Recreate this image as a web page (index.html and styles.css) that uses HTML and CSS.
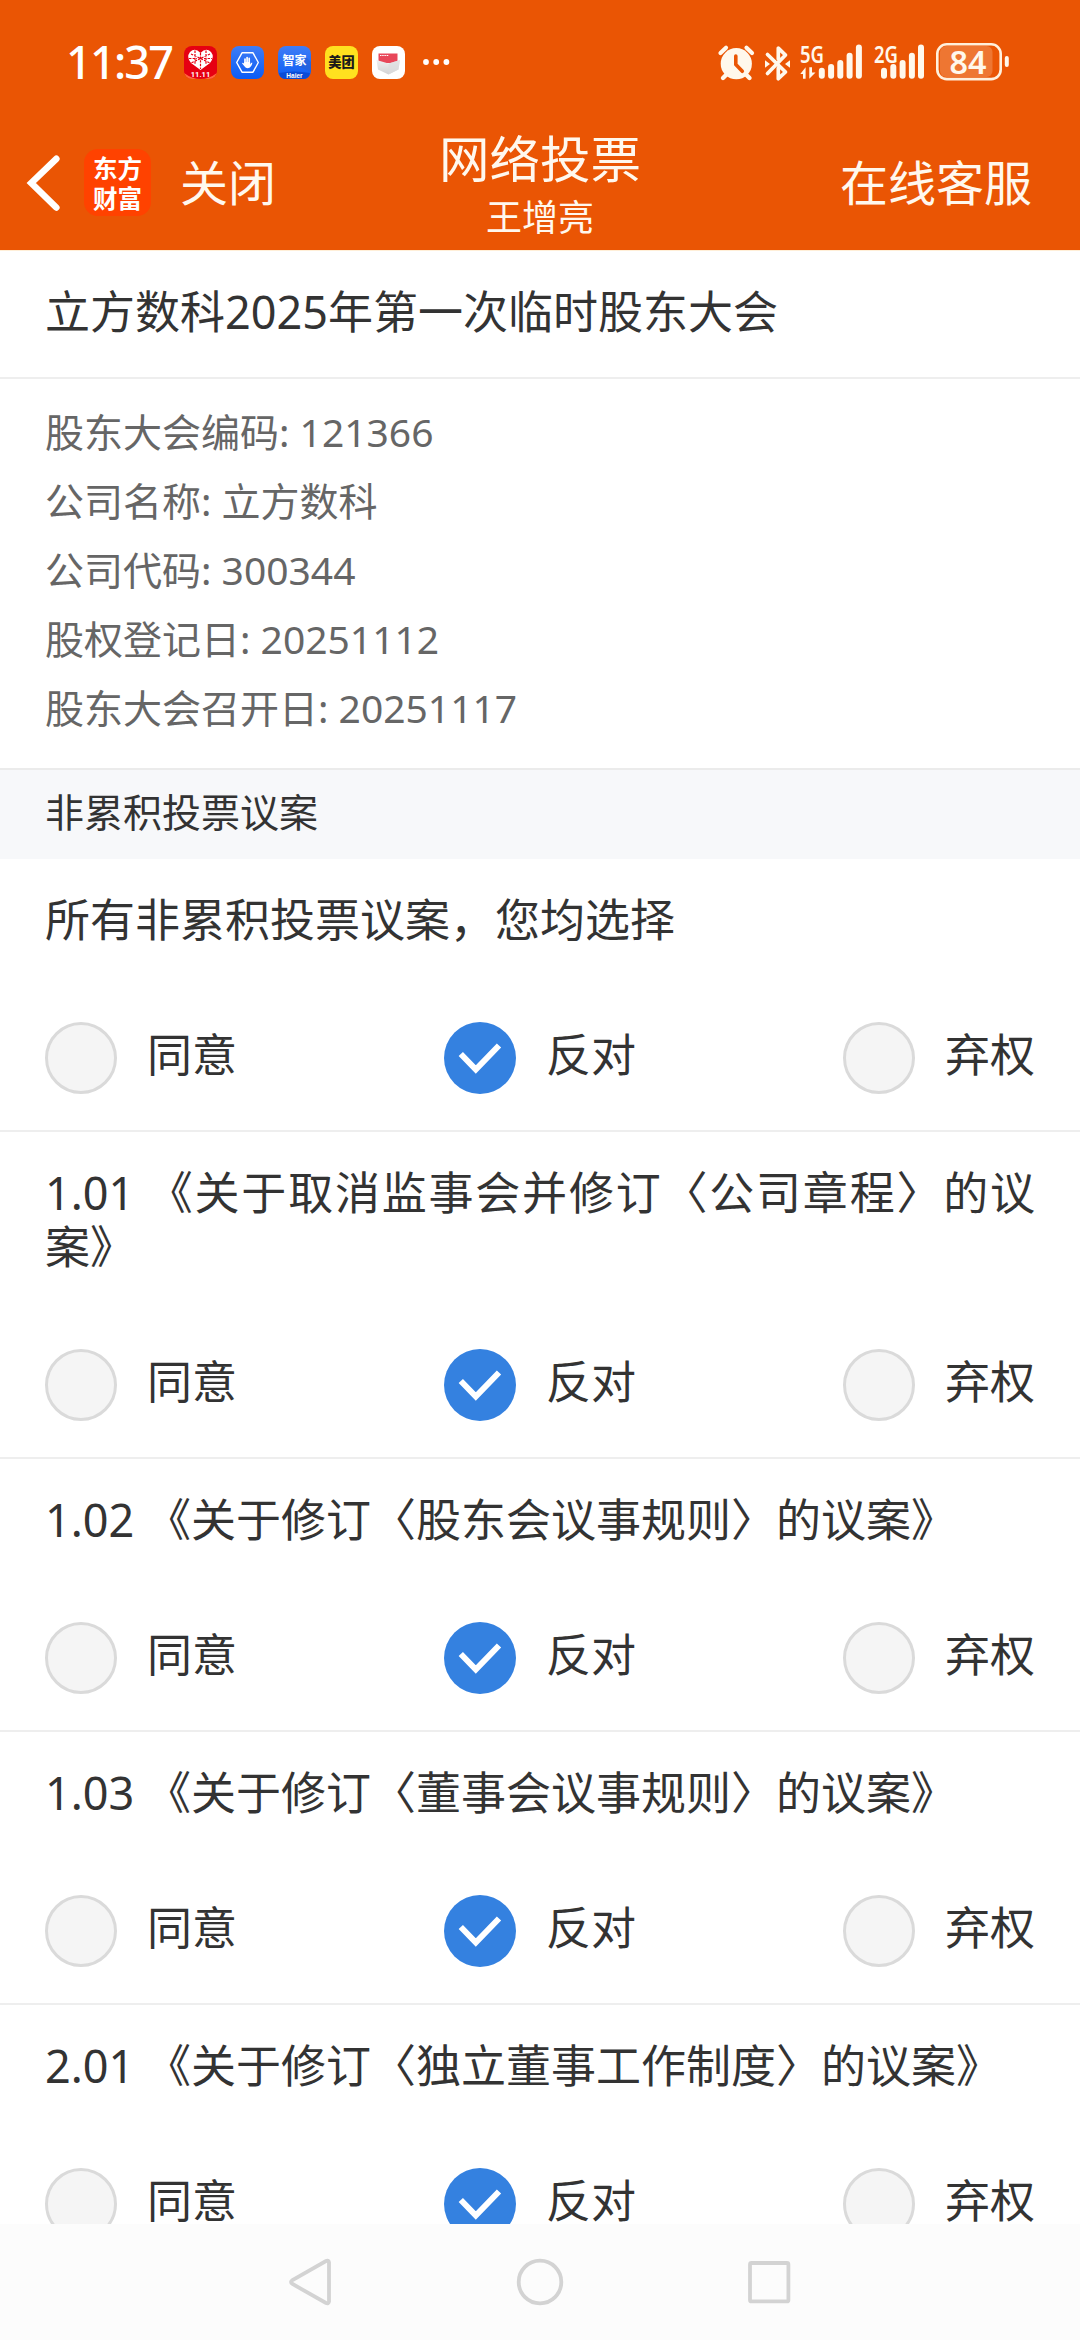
FILE: index.html
```html
<!DOCTYPE html>
<html lang="zh-CN">
<head>
<meta charset="utf-8">
<title>网络投票</title>
<link rel="stylesheet" href="styles.css">
</head>
<body>
<svg class="defs" aria-hidden="true">
  <symbol id="check" viewBox="0 0 72 72">
    <circle cx="36" cy="36" r="36" fill="#3481e0"/>
    <path d="M16.8 32 L31.8 47.5 L55 23.5" fill="none" stroke="#fff" stroke-width="6"/>
  </symbol>
</svg>
<div class="screen">
  <header class="header">
    <div class="status">
      <span class="clock">11:37</span>
      <div class="apps">
        <svg class="app" viewBox="0 0 33 33">
          <defs><clipPath id="r"><rect width="33" height="33" rx="8"/></clipPath></defs>
          <g clip-path="url(#r)">
            <rect width="33" height="33" fill="#e60012"/>
            <path d="M0 27 Q8 33 16.5 33 T33 27 V33 H0Z" fill="#ff6a3c"/>
            <path d="M16.5 24 L7 17 Q2 11 6 6 Q11 1 16.5 7 Q22 1 27 6 Q31 11 26 17Z" fill="#fff"/>
            <path d="M7 8 L26 17 M26 8 L7 17 M16.5 7 V23 M11 4.5 V19 M22 4.5 V19 M5 12.5 H13 M20 12.5 H28" stroke="#e60012" stroke-width="1.2" stroke-dasharray="2.4 1.2" fill="none"/>
            <text x="16.5" y="31.3" class="tiny">11.11</text>
          </g>
        </svg>
        <svg class="app" viewBox="0 0 33 33">
          <defs><linearGradient id="b1" x2="0" y2="1"><stop stop-color="#3f7df6"/><stop offset="1" stop-color="#0b5cf5"/></linearGradient></defs>
          <rect width="33" height="33" rx="8" fill="url(#b1)"/>
          <path d="M11 6.8 H22 L27.3 16.5 L22 26.2 H11 L5.7 16.5Z" fill="none" stroke="#fff" stroke-width="1.4" stroke-linejoin="round"/>
          <path d="M14 13 V18 M16.1 11.6 V18 M18.2 12.4 V18" stroke="#fff" stroke-width="1.7" stroke-linecap="round" fill="none"/>
          <path d="M13.2 16 H19.1 V18.5 Q20 16.8 21.2 16.6 Q21.6 17.4 20.5 19.6 Q19.2 22.2 16.8 22.2 Q14.6 22.2 13.4 20.2 L11 17.2 Q11.6 16.2 13.2 17.8Z" fill="#fff"/>
        </svg>
        <svg class="app" viewBox="0 0 33 33">
          <rect width="33" height="33" rx="8" fill="url(#b1)"/>
          <path d="M28 11 L33 16 V26 L20 20Z" fill="#285fd0" opacity=".6"/>
          <path d="M1 27 Q16 24 32 27 Q31 33 25 33 H8 Q2 33 1 27Z" fill="#0b4bd6"/>
          <text x="16.5" y="19.3" class="home">智家</text>
          <text x="16.5" y="32" class="haier">Haier</text>
        </svg>
        <svg class="app" viewBox="0 0 33 33">
          <rect width="33" height="33" rx="8" fill="#ffe11f"/>
          <text x="16.5" y="21.4" class="meituan">美团</text>
        </svg>
        <svg class="app" viewBox="0 0 33 33">
          <defs><linearGradient id="g1" x2="0" y2="1"><stop stop-color="#efeff0"/><stop offset="1" stop-color="#d2d2d4"/></linearGradient></defs>
          <rect width="33" height="33" rx="8" fill="#fff"/>
          <path d="M6.5 7.5 H25.5 V17 H6.5Z" fill="#e8475a"/>
          <path d="M8 9.5 H17" stroke="#fff" stroke-width="1" stroke-dasharray="1.5 .7"/>
          <path d="M4.5 14 L16.5 17.5 L28 14 L26.5 23.5 L16.5 28.5 L6 23.5Z" fill="url(#g1)"/>
          <path d="M16.5 17.5 L28 14 L26.5 23.5 L16.5 28.5Z" fill="#dcdcde" opacity=".6"/>
        </svg>
        <svg class="more" viewBox="0 0 28 8"><g fill="#fff"><circle cx="4" cy="4" r="2.9"/><circle cx="14.2" cy="4" r="2.9"/><circle cx="24.4" cy="4" r="2.9"/></g></svg>
      </div>
      <svg class="indicators" viewBox="716 40 296 42">
        <g fill="#fff8ec">
          <circle cx="736.3" cy="62.7" r="15.6"/>
          <path d="M720.5 52 L726 46.8 M752 52 L746.5 46.8" stroke="#fff8ec" stroke-width="4.2" stroke-linecap="round"/>
          <path d="M727 73 L723 77 M745.5 73 L749.5 77" stroke="#fff8ec" stroke-width="4.4" stroke-linecap="round"/>
          <path d="M735.8 55 V63.5 L742.3 70.3" stroke="#ea5504" stroke-width="3.6" fill="none" stroke-linecap="round" stroke-linejoin="round"/>
          <path d="M767.5 53.5 L785.5 71 L778.3 77.7 V67 M767.5 72.5 L785.5 54 L778.3 47.2 V58" fill="none" stroke="#fff8ec" stroke-width="3.7" stroke-linecap="round" stroke-linejoin="round"/>
          <path d="M765 59.3 L770 63 L765 66.7Z M790 59.3 L785 63 L790 66.7Z"/>
          <path d="M805.6 77.8 V66.2 L800.3 73 H803 V77.8Z M809.3 66.2 V77.8 L815.5 71.5 H812 V66.2Z"/>
          <rect x="818.8" y="66.8" width="6" height="11" rx="3"/>
          <rect x="828.1" y="63" width="6" height="14.8" rx="3"/>
          <rect x="837.3" y="59" width="6" height="18.8" rx="3"/>
          <rect x="846.6" y="51.8" width="6" height="26" rx="3"/>
          <rect x="855.9" y="43.5" width="6" height="34.3" rx="3"/>
          <rect x="881" y="66.8" width="6" height="11" rx="3"/>
          <rect x="890.3" y="63" width="6" height="14.8" rx="3"/>
          <rect x="899.6" y="59" width="6" height="18.8" rx="3"/>
          <rect x="908.9" y="51.8" width="6" height="26" rx="3"/>
          <rect x="918" y="43.5" width="6" height="34.3" rx="3"/>
          <text x="800" y="61.8" class="net" textLength="24" lengthAdjust="spacingAndGlyphs">5G</text>
          <text x="874" y="61.8" class="net" textLength="24" lengthAdjust="spacingAndGlyphs">2G</text>
          <rect x="940" y="45" width="52.5" height="31" rx="6" opacity=".2"/>
          <rect x="937.3" y="43.3" width="63.4" height="34.8" rx="9.5" fill="none" stroke="#fff0dc" stroke-width="2.6"/>
          <rect x="1004.8" y="55" width="4" height="11" rx="2"/>
          <text x="968" y="72.7" class="charge" textLength="37" lengthAdjust="spacingAndGlyphs">84</text>
        </g>
      </svg>
    </div>
    <nav class="navbar">
      <div class="nav-left">
        <svg class="back" viewBox="0 0 34 58"><path d="M30.3 4.8 L5.3 29 L30.3 53.5" fill="none" stroke="#fff" stroke-width="6.6" stroke-linecap="round"/></svg>
        <div class="logo"><span>东方</span><span>财富</span></div>
        <span class="nav-text">关闭</span>
      </div>
      <div class="nav-title">
        <h1>网络投票</h1>
        <p>王增亮</p>
      </div>
      <div class="nav-right"><span class="nav-text">在线客服</span></div>
    </nav>
  </header>

  <main class="content">
    <h2 class="meeting">立方数科2025年第一次临时股东大会</h2>
    <ul class="info">
      <li>股东大会编码: 121366</li>
      <li>公司名称: 立方数科</li>
      <li>公司代码: 300344</li>
      <li>股权登记日: 20251112</li>
      <li>股东大会召开日: 20251117</li>
    </ul>
    <h3 class="band">非累积投票议案</h3>

    <section class="motion">
      <p>所有非累积投票议案，您均选择</p>
      <div class="options">
        <label><i class="radio"></i>同意</label>
        <label><svg class="tick"><use href="#check"/></svg>反对</label>
        <label><i class="radio"></i>弃权</label>
      </div>
    </section>
    <section class="motion">
      <p>1.01 《关于取消监事会并修订〈公司章程〉的议案》</p>
      <div class="options">
        <label><i class="radio"></i>同意</label>
        <label><svg class="tick"><use href="#check"/></svg>反对</label>
        <label><i class="radio"></i>弃权</label>
      </div>
    </section>
    <section class="motion">
      <p>1.02 《关于修订〈股东会议事规则〉的议案》</p>
      <div class="options">
        <label><i class="radio"></i>同意</label>
        <label><svg class="tick"><use href="#check"/></svg>反对</label>
        <label><i class="radio"></i>弃权</label>
      </div>
    </section>
    <section class="motion">
      <p>1.03 《关于修订〈董事会议事规则〉的议案》</p>
      <div class="options">
        <label><i class="radio"></i>同意</label>
        <label><svg class="tick"><use href="#check"/></svg>反对</label>
        <label><i class="radio"></i>弃权</label>
      </div>
    </section>
    <section class="motion">
      <p>2.01 《关于修订〈独立董事工作制度〉的议案》</p>
      <div class="options">
        <label><i class="radio"></i>同意</label>
        <label><svg class="tick"><use href="#check"/></svg>反对</label>
        <label><i class="radio"></i>弃权</label>
      </div>
    </section>
  </main>

  <footer class="system-nav">
    <svg viewBox="0 0 48 48"><path d="M42 4.3 V43.7 Q41.5 46 39 45 L5.5 26 Q2.5 24 5.5 22 L39 3 Q41.5 2 42 4.3Z" fill="none" stroke="#d3d3d3" stroke-width="3.8"/></svg>
    <svg viewBox="0 0 48 48"><circle cx="24" cy="24" r="21.3" fill="none" stroke="#d3d3d3" stroke-width="3.8"/></svg>
    <svg viewBox="0 0 48 48"><rect x="5" y="5" width="38.4" height="38.4" rx="1.5" fill="none" stroke="#d3d3d3" stroke-width="3.8"/></svg>
  </footer>
</div>
</body>
</html>
```
FILE: styles.css
```css
* { box-sizing: border-box; margin: 0; padding: 0; }

body {
  font-family: "Noto Sans", "Noto Sans CJK SC", sans-serif;
  color: #333;
  background: #fff;
  text-spacing-trim: space-all;
}

h1, h2, h3 { font-weight: 400; }
ul { list-style: none; }
svg { display: block; flex: none; }
.defs { width: 0; height: 0; position: absolute; }

.screen {
  width: 1080px;
  height: 2340px;
  display: flex;
  flex-direction: column;
  overflow: hidden;
}

/* header */
.header {
  flex: none;
  height: 251px;
  background: #ea5504;
  border-bottom: 1px solid #ffefd8;
  color: #fff8ee;
}

.status {
  height: 124px;
  padding: 0 68px 0 66px;
  display: flex;
  align-items: center;
}

.clock {
  width: 118px;
  font: 500 45px/60px "Noto Sans", sans-serif;
  letter-spacing: -1.8px;
  color: #fff;
}

.apps { display: flex; align-items: center; gap: 14px; }
.app { width: 33px; height: 33px; }
.more { width: 28px; height: 8px; margin-left: 3px; }
.indicators { width: 296px; height: 42px; margin-left: auto; overflow: visible; }

.apps text { text-anchor: middle; fill: #fff; }
.apps .tiny { font: 700 7.5px "Roboto", sans-serif; }
.apps .home { font: 700 12px "Noto Sans CJK SC", sans-serif; }
.apps .haier { font: 700 6.5px "Liberation Sans", sans-serif; }
.apps .meituan { font: 900 13.2px "Noto Sans CJK SC", sans-serif; fill: #1a1a1a; }
.net { font: 600 24px "Noto Sans", sans-serif; }
.charge { font: 600 33px "Noto Sans", sans-serif; text-anchor: middle; }

.navbar {
  height: 126px;
  padding: 0 48px 0 26px;
  display: flex;
}

.nav-left, .nav-right {
  flex: none;
  width: 380px;
  display: flex;
  align-items: center;
  padding-bottom: 9px;
}
.nav-right { width: 358px; justify-content: flex-end; }
.nav-text { font-size: 48px; line-height: 60px; white-space: nowrap; }
.back { width: 34px; height: 58px; }

.logo {
  width: 67px;
  height: 67px;
  margin: 0 29px 0 24px;
  border-radius: 14px;
  background: #ff4200;
  display: flex;
  flex-direction: column;
  align-items: center;
  justify-content: center;
  font: 700 24.5px/30px "Noto Sans CJK SC", sans-serif;
  color: #fff;
}

.nav-title { flex: 1; padding-top: 1px; text-align: center; }
.nav-title h1 { font-size: 50.5px; line-height: 68px; white-space: nowrap; }
.nav-title p { font-size: 36px; line-height: 50px; }

/* meeting details */
.content {
  flex: 1 1 0;
  min-height: 0;
  overflow: hidden;
}

.meeting {
  height: 128px;
  padding: 31px 45px 0;
  font-size: 45px;
  line-height: 60px;
  border-bottom: 2px solid #eee;
}

.info {
  height: 389px;
  padding: 18px 45px 0;
  color: #666;
  font-size: 39px;
  line-height: 69px;
}

.band {
  height: 91px;
  padding: 12px 45px 0;
  border-top: 2px solid #ebebeb;
  background: #f7f8fa;
  font-size: 39px;
  line-height: 60px;
}

/* motions */
.motion {
  padding: 34px 45px 36px;
  border-bottom: 2px solid #eee;
}
.motion p {
  font-size: 45px;
  line-height: 54px;
  text-align: justify;
}

.options {
  margin-top: 75px;
  display: flex;
  justify-content: space-between;
}
.options label {
  display: flex;
  gap: 30px;
  font-size: 45px;
  line-height: 66px;
}
.radio {
  width: 72px;
  height: 72px;
  border: 3px solid #dadada;
  border-radius: 50%;
  background: #f5f5f5;
}
.tick { width: 72px; height: 72px; }

/* system navigation */
.system-nav {
  flex: none;
  height: 116px;
  background: #fcfcfc;
  display: flex;
  justify-content: center;
  align-items: center;
  gap: 181px;
}
.system-nav svg { width: 48px; height: 48px; }
```
